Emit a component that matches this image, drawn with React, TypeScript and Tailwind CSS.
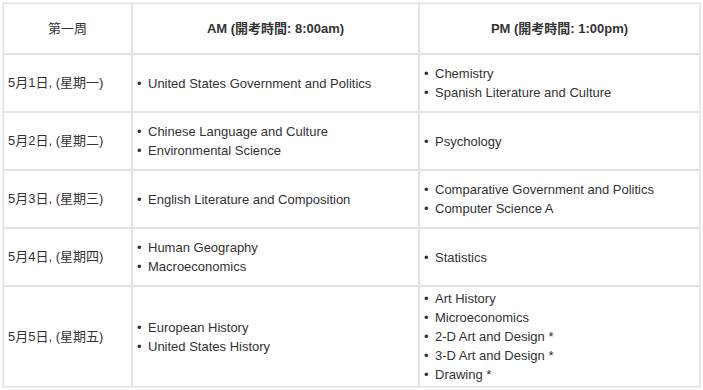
const rows: { day: string; am: string[]; pm: string[]; h: string }[] = [
  {
    day: "5月1日, (星期一)",
    am: ["United States Government and Politics"],
    pm: ["Chemistry", "Spanish Literature and Culture"],
    h: "h-[58px]",
  },
  {
    day: "5月2日, (星期二)",
    am: ["Chinese Language and Culture", "Environmental Science"],
    pm: ["Psychology"],
    h: "h-[58px]",
  },
  {
    day: "5月3日, (星期三)",
    am: ["English Literature and Composition"],
    pm: ["Comparative Government and Politics", "Computer Science A"],
    h: "h-[58px]",
  },
  {
    day: "5月4日, (星期四)",
    am: ["Human Geography", "Macroeconomics"],
    pm: ["Statistics"],
    h: "h-[58px]",
  },
  {
    day: "5月5日, (星期五)",
    am: ["European History", "United States History"],
    pm: [
      "Art History",
      "Microeconomics",
      "2-D Art and Design *",
      "3-D Art and Design *",
      "Drawing *",
    ],
    h: "h-[101px]",
  },
];

function Bullets({ items }: { items: string[] }) {
  return (
    <ul>
      {items.map((t) => (
        <li key={t} className="leading-[19px] whitespace-nowrap">
          <span className="inline-block w-[11px]">•</span>
          {t}
        </li>
      ))}
    </ul>
  );
}

export default function App() {
  return (
    <div className="w-[703px] h-[390px] bg-white pl-[2px] pt-[2px] font-['Liberation_Sans',Arial,'Noto_Sans_CJK_TC',sans-serif] text-[13px] text-[#333]">
      <table className="w-[699px] table-fixed border-separate border-spacing-0 border border-[#eee]">
        <colgroup>
          <col className="w-[129px]" />
          <col className="w-[287px]" />
          <col />
        </colgroup>
        <thead>
          <tr className="h-[51px]">
            <th className="border border-[#e3e3e3] text-center font-normal">第一周</th>
            <th className="border border-[#e3e3e3] text-center font-bold">AM (開考時間: 8:00am)</th>
            <th className="border border-[#e3e3e3] text-center font-bold">PM (開考時間: 1:00pm)</th>
          </tr>
        </thead>
        <tbody>
          {rows.map((r) => (
            <tr key={r.day} className={r.h}>
              <td className="border border-[#e3e3e3] pl-[4px] align-middle">{r.day}</td>
              <td className="border border-[#e3e3e3] pl-[4px] align-middle">
                <Bullets items={r.am} />
              </td>
              <td className="border border-[#e3e3e3] pl-[4px] align-middle">
                <Bullets items={r.pm} />
              </td>
            </tr>
          ))}
        </tbody>
      </table>
    </div>
  );
}
